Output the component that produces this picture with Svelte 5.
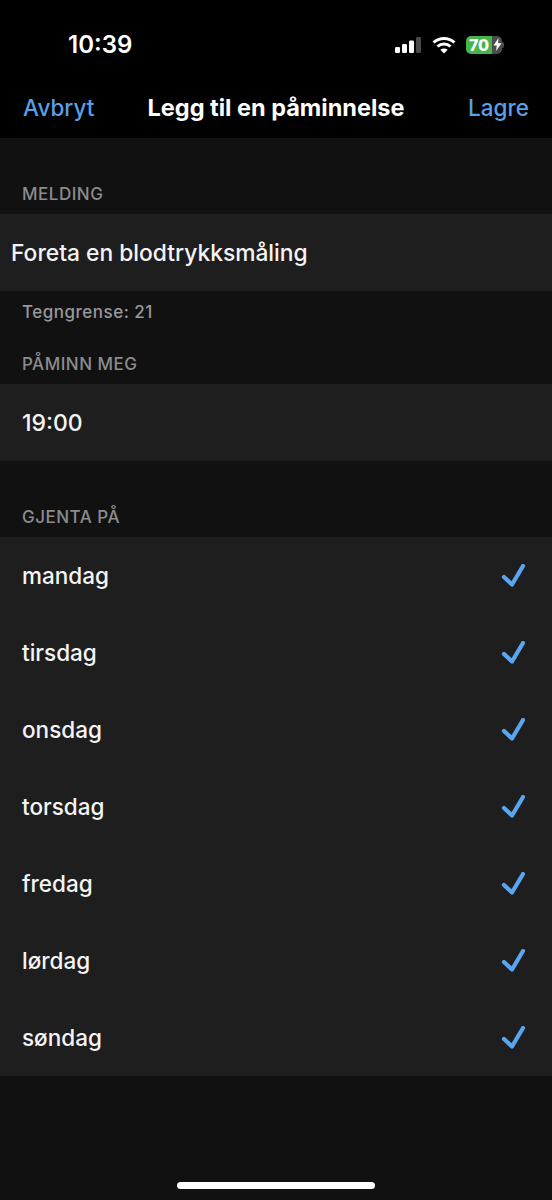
<script lang="ts">
  const days = ['mandag', 'tirsdag', 'onsdag', 'torsdag', 'fredag', 'lørdag', 'søndag'];
</script>

<div class="screen">
  <div class="status">
    <span class="clock">10:39</span>
    <div class="status-icons">
      <svg class="signal" width="27" height="16" viewBox="0 0 27 16">
        <rect x="0" y="10" width="5" height="6" rx="1.2" fill="#fff" />
        <rect x="7" y="7" width="5" height="9" rx="1.2" fill="#fff" />
        <rect x="14" y="3.500" width="5" height="12.500" rx="1.2" fill="#fff" />
        <rect x="21" y="0" width="5" height="16" rx="1.2" fill="#4a4a4a" />
      </svg>
      <svg class="wifi" width="24" height="18" viewBox="0 0 24 18" fill="none" stroke="#fff" stroke-width="3">
        <path d="M1.500 6.500C7.500 1 16.500 1 22.500 6.500" />
        <path d="M5.500 10.500C9 7.300 15 7.300 18.500 10.500" />
        <path d="M12 17.500L8.300 13.800C10.300 12.200 13.700 12.200 15.700 13.800Z" fill="#fff" stroke="none" />
      </svg>
      <div class="battery">
        <div class="level">70</div>
        <div class="rest">
          <svg width="9" height="13" viewBox="0 0 9 13"><path d="M5.500 0L0.500 7.500H3.800L3 13L8.500 5.300H5.100Z" fill="#fff" /></svg>
        </div>
        <div class="nub"></div>
      </div>
    </div>
  </div>

  <nav class="nav">
    <span class="link">Avbryt</span>
    <span class="title">Legg til en påminnelse</span>
    <span class="link right">Lagre</span>
  </nav>

  <main class="content">
    <div class="label first">MELDING</div>
    <div class="row message">Foreta en blodtrykksmåling</div>
    <div class="hint">Tegngrense: 21</div>
    <div class="label tight">PÅMINN MEG</div>
    <div class="row time">19:00</div>
    <div class="label repeat">GJENTA PÅ</div>
    <div class="list">
      {#each days as day}
        <div class="row day">
          <span>{day}</span>
          <svg width="26" height="24" viewBox="0 0 26 24" fill="none" stroke="#5aa5f0" stroke-width="4.200" stroke-linecap="round" stroke-linejoin="round">
            <path d="M4 13L12 20.500L23 2" />
          </svg>
        </div>
      {/each}
    </div>
    <div class="spacer"></div>
    <div class="home"></div>
  </main>
</div>

<style>
  :global(body) { margin: 0; background: #000; }
  .screen {
    width: 552px;
    height: 1200px;
    display: flex;
    flex-direction: column;
    background: #000;
    color: #f4f4f4;
    font-family: Inter, "Liberation Sans", sans-serif;
    overflow: hidden;
  }
  .status {
    height: 84px;
    box-sizing: border-box;
    padding: 29px 50px 0 68px;
    display: flex;
    justify-content: space-between;
    align-items: flex-start;
    flex-shrink: 0;
  }
  .clock { font-size: 24px; line-height: 31px; font-weight: 600; color: #fff; }
  .status-icons { display: flex; align-items: center; gap: 10px; height: 31px; }
  .battery {
    display: flex;
    align-items: stretch;
    width: 36px;
    height: 18px;
    position: relative;
    border-radius: 5px;
  }
  .level {
    width: 26px;
    background: #45b649;
    border-radius: 5px 0 0 5px;
    color: #fff;
    font-size: 16px;
    font-weight: 800;
    line-height: 18px;
    text-align: center;
  }
  .rest {
    flex: 1;
    background: #4c4c4c;
    border-radius: 0 5px 5px 0;
    display: flex;
    align-items: center;
    justify-content: center;
  }
  .nub { position: absolute; right: -2px; top: 6px; width: 2px; height: 6px; background: #4c4c4c; border-radius: 0 2px 2px 0; }
  .nav {
    height: 54px;
    box-sizing: border-box;
    padding: 0 23px 8px;
    display: grid;
    grid-template-columns: 1fr auto 1fr;
    align-items: center;
    flex-shrink: 0;
  }
  .link { color: #5aa0e6; font-size: 22.500px; font-weight: 500; }
  .right { text-align: right; }
  .title { color: #fff; font-size: 23.500px; font-weight: 700; }
  .content {
    flex: 1;
    display: flex;
    flex-direction: column;
    background: #111112;
  }
  .label {
    padding: 0 22px;
    font-size: 17px;
    line-height: 20px;
    font-weight: 500;
    color: #8c8c8e;
    letter-spacing: 0.5px;
  }
  .first { margin-top: 46px; margin-bottom: 10px; }
  .tight { margin-top: 32px; margin-bottom: 10px; }
  .repeat { margin-top: 46px; margin-bottom: 10px; }
  .row {
    background: #1e1e1f;
    box-sizing: border-box;
    height: 77px;
    display: flex;
    align-items: center;
    font-size: 22.500px;
    font-weight: 500;
  }
  .message { padding-left: 11px; font-size: 22.800px; }
  .time { padding-left: 22px; font-size: 23px; }
  .hint {
    margin-top: 11px;
    padding: 0 22px;
    font-size: 17px;
    line-height: 20px;
    font-weight: 500;
    color: #98989a;
    letter-spacing: 0.5px;
  }
  .day { justify-content: space-between; padding: 0 26px 0 22px; }
  .spacer { flex: 1; }
  .home {
    width: 198px;
    height: 7px;
    margin: 0 auto 11px;
    border-radius: 4px;
    background: #fff;
  }
</style>
